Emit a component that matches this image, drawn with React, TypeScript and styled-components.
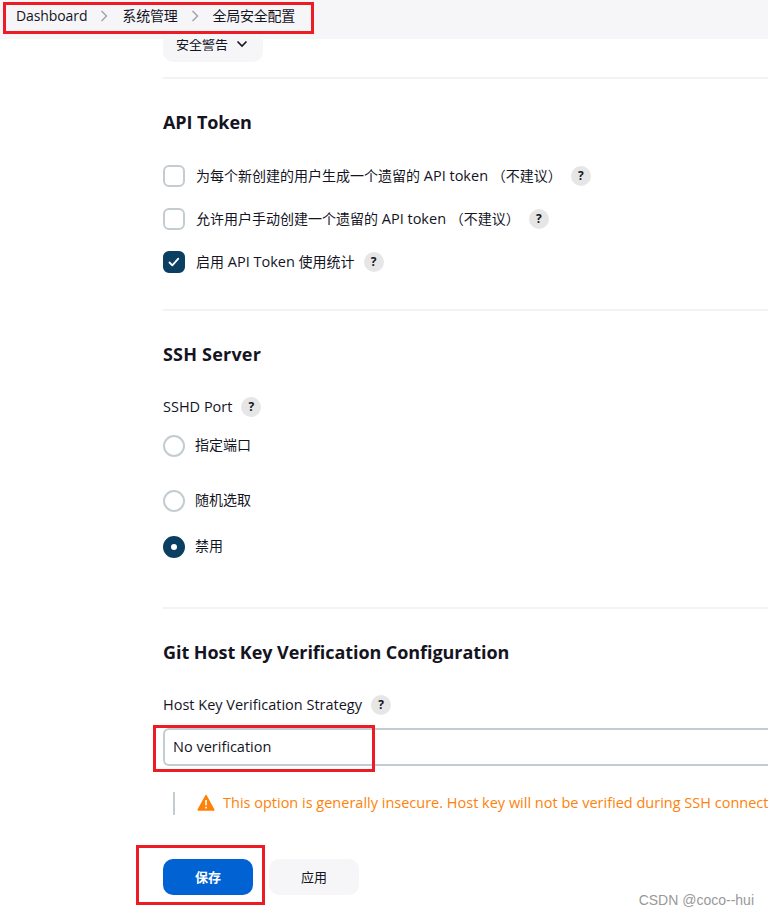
import React from "react";
import styled, { createGlobalStyle } from "styled-components";

const GlobalStyle = createGlobalStyle`
  * { box-sizing: border-box; }
  html, body { margin: 0; padding: 0; background: #fff; overflow: hidden; }
  body {
    font-family: "Open Sans", "Noto Sans CJK SC", sans-serif;
    font-size: 14px;
    color: #14141f;
  }
`;

const Page = styled.div`
  position: relative;
  width: 768px;
  height: 915px;
  overflow: hidden;
  background: #fff;
`;

const Breadcrumbs = styled.header`
  display: flex;
  align-items: center;
  height: 39px;
  padding: 0 0 7px 16px;
  background: #f6f6f8;
`;

const Main = styled.main`
  padding-left: 163px;
  display: flex;
  flex-direction: column;
`;

const Text = styled.span<{ $track?: number; $size?: number }>`
  font-size: ${(p) => p.$size ?? 14}px;
  letter-spacing: ${(p) => p.$track ?? 0}px;
  line-height: 20px;
  white-space: pre;
`;

const Latin = styled(Text)`
  font-size: 14.5px;
`;

const RadioLabel = styled(Text)`
  padding-bottom: 2px;
`;

const Separator = styled.svg`
  width: 8px;
  height: 12px;
  margin: 0 14px 0 13px;
  fill: none;
  stroke: #a3a3b5;
  stroke-width: 1.5;
`;

const Clip = styled.div`
  height: 23px;
  overflow: hidden;
  display: flex;
  align-items: flex-end;
`;

const MenuButton = styled.button`
  display: flex;
  flex-shrink: 0;
  align-items: center;
  gap: 8px;
  width: 100px;
  height: 36px;
  padding: 0 0 0 13px;
  border: 0;
  border-radius: 10px;
  background: #f6f6f8;
  color: #14141f;
  font-family: inherit;
`;

const Divider = styled.hr<{ $top: number }>`
  width: 100%;
  height: 2px;
  margin: ${(p) => p.$top}px 0 0;
  border: 0;
  background: #f3f3f6;
`;

const Heading = styled.h2<{ $track: number }>`
  margin: 29px 0 0;
  height: 28px;
  line-height: 28px;
  font-size: 18px;
  font-weight: 700;
  letter-spacing: ${(p) => p.$track}px;
`;

const Row = styled.div<{ $top: number }>`
  display: flex;
  align-items: center;
  height: 22px;
  margin-top: ${(p) => p.$top}px;
`;

const Checkbox = styled.span<{ $checked?: boolean }>`
  display: flex;
  align-items: center;
  justify-content: center;
  width: 22px;
  height: 22px;
  margin-right: 11px;
  border-radius: 6px;
  border: 2px solid ${(p) => (p.$checked ? "#0b3f61" : "#c3cdd1")};
  background: ${(p) => (p.$checked ? "#0b3f61" : "#fff")};
`;

const Radio = styled.span<{ $checked?: boolean }>`
  width: 22px;
  height: 22px;
  margin-right: 10px;
  border-radius: 50%;
  border: ${(p) => (p.$checked ? "8px solid #0b3f61" : "2px solid #c3cdd1")};
  background: #fff;
`;

const HelpBadge = styled.span`
  display: flex;
  align-items: center;
  justify-content: center;
  width: 20px;
  height: 20px;
  margin-left: 9px;
  border-radius: 50%;
  background: #e6e6e6;
  font-size: 12px;
  font-weight: 700;
  line-height: 20px;
`;

const Select = styled.div`
  display: flex;
  align-items: center;
  height: 38px;
  margin-top: 12px;
  padding: 0 0 1px 8px;
  border: 2px solid #c3cdd1;
  border-right: 0;
  border-radius: 6px 0 0 6px;
`;

const Warning = styled.div`
  display: flex;
  align-items: center;
  height: 23px;
  margin: 26px 0 0 10px;
  padding: 0 0 2px 22px;
  border-left: 2px solid #c3cdd1;
  color: #fe820a;
`;

const WarningIcon = styled.svg`
  flex-shrink: 0;
  width: 18px;
  height: 18px;
  margin-right: 8px;
`;

const Actions = styled.div`
  display: flex;
  gap: 16px;
  margin-top: 44px;
`;

const ActionButton = styled.button<{ $primary?: boolean }>`
  width: 90px;
  height: 36px;
  padding: 0 0 2px;
  border: 0;
  border-radius: 10px;
  background: ${(p) => (p.$primary ? "#0062d3" : "#f6f6f8")};
  color: ${(p) => (p.$primary ? "#fff" : "#14141f")};
  font-family: inherit;
  font-size: 13px;
  font-weight: ${(p) => (p.$primary ? 700 : 400)};
`;

const Highlight = styled.div<{ $x: number; $y: number; $w: number; $h: number }>`
  position: absolute;
  left: ${(p) => p.$x}px;
  top: ${(p) => p.$y}px;
  width: ${(p) => p.$w}px;
  height: ${(p) => p.$h}px;
  border: 3px solid #ed1c24;
`;

const Watermark = styled.div`
  position: absolute;
  right: 14px;
  top: 891px;
  font-family: "Liberation Sans", sans-serif;
  font-size: 14px;
  line-height: 18px;
  color: #999;
`;

const Chevron = () => (
  <Separator viewBox="0 0 8 12">
    <path d="M1.5 1 L6.5 6 L1.5 11" />
  </Separator>
);

const Help = () => <HelpBadge>?</HelpBadge>;

export default function App() {
  return (
    <Page>
      <GlobalStyle />
      <Breadcrumbs>
        <Text $track={-0.1}>Dashboard</Text>
        <Chevron />
        <Text $track={-0.2}>系统管理</Text>
        <Chevron />
        <Text $track={-0.25}>全局安全配置</Text>
      </Breadcrumbs>
      <Main>
        <Clip>
          <MenuButton>
            <Text $size={13}>安全警告</Text>
            <svg width="12" height="8" viewBox="0 0 12 8" fill="none" stroke="#14141f" strokeWidth="1.6">
              <path d="M1.5 1.5 L6 6 L10.5 1.5" />
            </svg>
          </MenuButton>
        </Clip>

        <Divider $top={15} />
        <Heading $track={-0.1}>API Token</Heading>
        <Row $top={29}>
          <Checkbox />
          <Text>
            为每个新创建的用户生成一个遗留的<Latin> API token </Latin>（不建议）
          </Text>
          <Help />
        </Row>
        <Row $top={21}>
          <Checkbox />
          <Text>
            允许用户手动创建一个遗留的<Latin> API token </Latin>（不建议）
          </Text>
          <Help />
        </Row>
        <Row $top={21}>
          <Checkbox $checked>
            <svg width="12" height="10" viewBox="0 0 12 10" fill="none" stroke="#fff" strokeWidth="1.8" strokeLinecap="round" strokeLinejoin="round">
              <path d="M1.5 5.5 L4.3 8.3 L10.3 1.7" />
            </svg>
          </Checkbox>
          <Text>
            启用<Latin> API Token </Latin>使用统计
          </Text>
          <Help />
        </Row>

        <Divider $top={36} />
        <Heading $track={0.2}>SSH Server</Heading>
        <Row $top={28}>
          <Latin>SSHD Port</Latin>
          <Help />
        </Row>
        <Row $top={17}>
          <Radio />
          <RadioLabel>指定端口</RadioLabel>
        </Row>
        <Row $top={33}>
          <Radio />
          <RadioLabel>随机选取</RadioLabel>
        </Row>
        <Row $top={24}>
          <Radio $checked />
          <RadioLabel>禁用</RadioLabel>
        </Row>

        <Divider $top={49} />
        <Heading $track={-0.06}>Git Host Key Verification Configuration</Heading>
        <Row $top={28}>
          <Latin>Host Key Verification Strategy</Latin>
          <Help />
        </Row>
        <Select>
          <Latin>No verification</Latin>
        </Select>
        <Warning>
          <WarningIcon viewBox="0 0 18 18">
            <path d="M9 1.6 L16.8 16 H1.2 Z" fill="#fe820a" stroke="#fe820a" strokeWidth="1.6" strokeLinejoin="round" />
            <path d="M9 6 V11.2 M9 12.8 V14.4" stroke="#fff" strokeWidth="1.6" />
          </WarningIcon>
          <Latin>This option is generally insecure. Host key will not be verified during SSH connect</Latin>
        </Warning>
        <Actions>
          <ActionButton $primary>保存</ActionButton>
          <ActionButton>应用</ActionButton>
        </Actions>
      </Main>
      <Highlight $x={3} $y={2} $w={311} $h={32} />
      <Highlight $x={153} $y={725} $w={222} $h={47} />
      <Highlight $x={136} $y={845} $w={129} $h={60} />
      <Watermark>CSDN @coco--hui</Watermark>
    </Page>
  );
}
